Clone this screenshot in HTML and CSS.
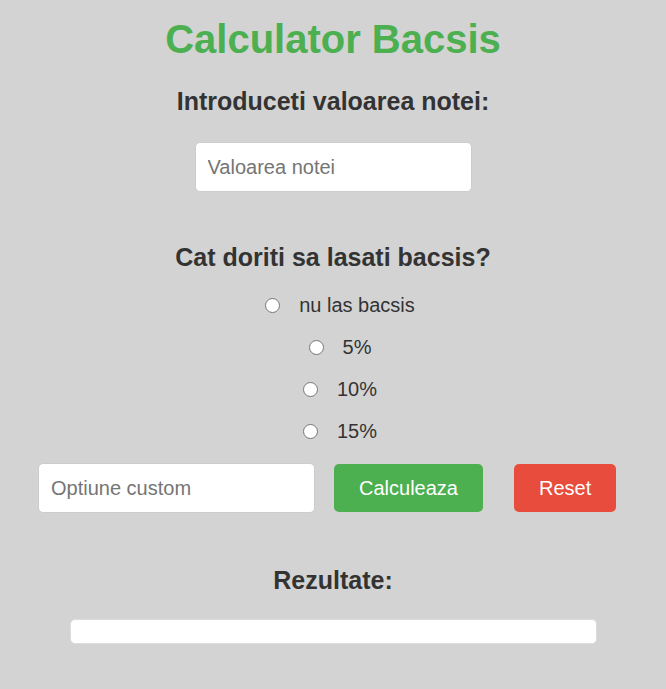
FILE: index.html
```html
<!DOCTYPE html>
<html lang="ro">
<head>
<meta charset="utf-8">
<title>Calculator Bacsis</title>
<link rel="stylesheet" href="styles.css">
</head>
<body>
<div class="app">
  <h1 class="title">Calculator Bacsis</h1>
  <h2 class="heading">Introduceti valoarea notei:</h2>
  <input class="field field-bill" type="text" placeholder="Valoarea notei">
  <h2 class="heading heading-tip">Cat doriti sa lasati bacsis?</h2>
  <div class="options">
    <label class="option"><input class="radio" type="radio" name="tip"><span class="option-text">nu las bacsis</span></label>
    <label class="option"><input class="radio" type="radio" name="tip"><span class="option-text">5%</span></label>
    <label class="option"><input class="radio" type="radio" name="tip"><span class="option-text">10%</span></label>
    <label class="option"><input class="radio" type="radio" name="tip"><span class="option-text">15%</span></label>
  </div>
  <div class="actions">
    <input class="field field-custom" type="text" placeholder="Optiune custom">
    <button class="btn btn-calc" type="button">Calculeaza</button>
    <button class="btn btn-reset" type="button">Reset</button>
  </div>
  <h2 class="heading heading-result">Rezultate:</h2>
  <div class="result"></div>
</div>
</body>
</html>
```

FILE: styles.css
```css
html, body {
  margin: 0;
  padding: 0;
  background: #d3d3d3;
}
body {
  font-family: "Liberation Sans", Arial, sans-serif;
  color: #333;
}
.app {
  display: flex;
  flex-direction: column;
  align-items: center;
  text-align: center;
}
.title {
  margin: 16px 0 0;
  font-size: 40px;
  line-height: 46px;
  font-weight: bold;
  color: #4caf50;
}
.heading {
  margin: 25px 0 0;
  font-size: 25px;
  line-height: 28px;
  font-weight: bold;
  color: #333;
}
.field {
  box-sizing: border-box;
  height: 50px;
  width: 277px;
  padding: 0 12px;
  border: 1px solid #ccc;
  border-radius: 5px;
  background: #fff;
  font-family: "Liberation Sans", Arial, sans-serif;
  font-size: 20px;
  color: #333;
  outline: none;
}
.field::placeholder {
  color: #757575;
}
.field-bill {
  margin-top: 27px;
}
.heading-tip {
  margin-top: 51px;
}
.options {
  margin-top: 13px;
  display: flex;
  flex-direction: column;
}
.option {
  display: flex;
  align-items: center;
  justify-content: center;
  height: 42px;
  padding-left: 14px;
  font-size: 20px;
  color: #333;
}
.radio {
  -webkit-appearance: none;
  appearance: none;
  box-sizing: border-box;
  margin: 0;
  width: 15px;
  height: 15px;
  border: 1px solid #767676;
  border-radius: 50%;
  background: #fff;
}
.option-text {
  margin-left: 19px;
}
.actions {
  margin-top: 11px;
  display: flex;
  align-items: center;
}
.field-custom {
  margin-right: 19px;
}
.btn {
  box-sizing: border-box;
  height: 48px;
  padding: 0 25px;
  border: none;
  border-radius: 5px;
  color: #fff;
  font-family: "Liberation Sans", Arial, sans-serif;
  font-size: 20px;
  cursor: pointer;
}
.btn-calc {
  width: 149px;
  background: #4caf50;
  margin-right: 31px;
}
.btn-reset {
  width: 102px;
  background: #e74c3c;
  margin-right: 12px;
}
.heading-result {
  margin-top: 53px;
}
.result {
  box-sizing: border-box;
  margin-top: 25px;
  width: 527px;
  height: 25px;
  background: #fff;
  border: 1px solid #ddd;
  border-radius: 5px;
}
```
